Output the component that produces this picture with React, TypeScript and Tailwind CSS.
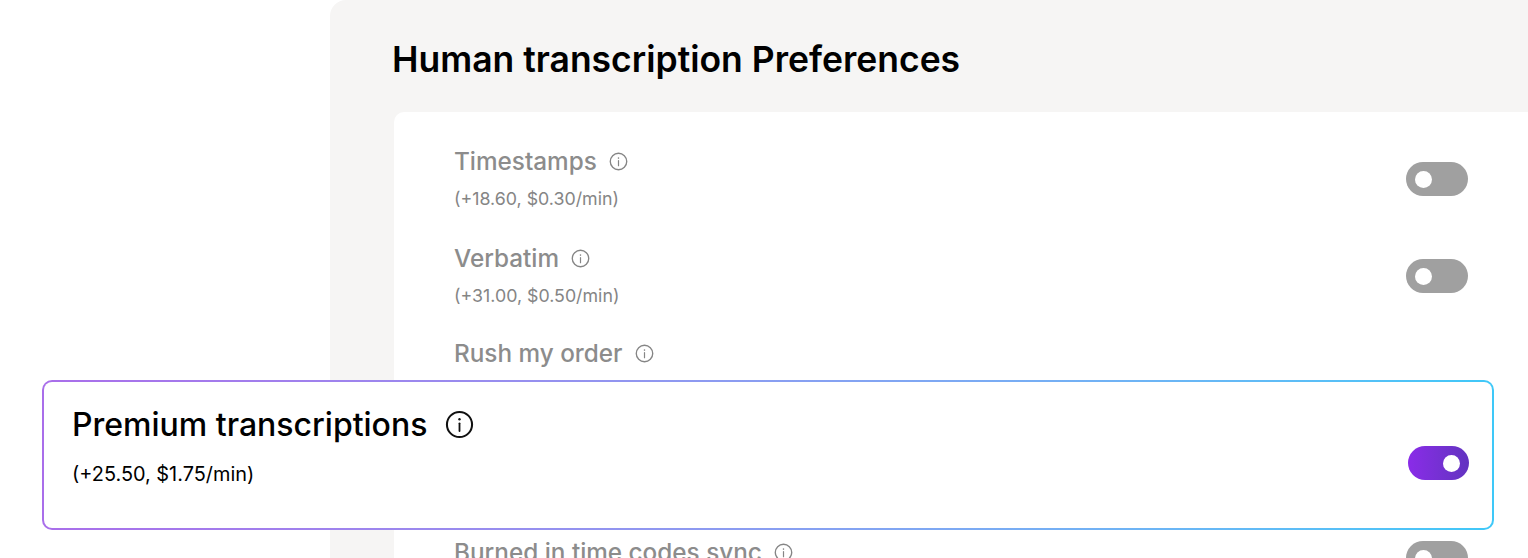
import React from 'react';

function InfoIcon({ className }: { className: string }) {
  return (
    <svg viewBox="0 0 24 24" fill="none" stroke="currentColor" className={className}>
      <circle cx="12" cy="12" r="10.4" strokeWidth="1.7" />
      <path d="M12 11v6.4" strokeWidth="1.5" strokeLinecap="round" />
      <circle cx="12" cy="7.7" r="1" fill="currentColor" stroke="none" />
    </svg>
  );
}

function Toggle() {
  return (
    <div className="flex h-[34px] w-[62px] shrink-0 items-center rounded-full bg-[#a0a0a0] pl-[9px]">
      <div className="h-[17px] w-[17px] rounded-full bg-white" />
    </div>
  );
}

function Row({ label, price, toggle = true }: { label: string; price?: string; toggle?: boolean }) {
  return (
    <div className="flex h-[97px] items-start justify-between pl-[60px] pr-[60px]">
      <div>
        <div className="flex h-[32px] items-center gap-[12px] text-[24.3px] font-medium text-[#8c8c8c]">
          {label}
          <InfoIcon className="h-[19px] w-[19px] text-[#858585]" />
        </div>
        {price && <div className="mt-[8px] text-[17.8px] leading-[28px] text-[#858585]">{price}</div>}
      </div>
      {toggle && (
        <div className="mt-[17px]">
          <Toggle />
        </div>
      )}
    </div>
  );
}

export default function App() {
  return (
    <div className="relative h-[558px] w-[1528px] overflow-hidden bg-white font-['Inter',sans-serif] text-black">
      <div className="ml-[330px] h-[700px] rounded-tl-[16px] bg-[#f6f5f4] pl-[62px]">
        <h1 className="flex h-[112px] items-center pt-[7px] text-[35.5px] font-semibold">Human transcription Preferences</h1>
        <div className="ml-[2px] h-[600px] rounded-l-[10px] bg-white pt-[33px]">
          <Row label="Timestamps" price="(+18.60, $0.30/min)" />
          <Row label="Verbatim" price="(+31.00, $0.50/min)" />
          <div className="-mt-[2px]">
            <Row label="Rush my order" toggle={false} />
          </div>
          <div className="h-[102px]" />
          <div className="flex items-start justify-between pl-[60px] pr-[60px]">
            <div className="flex h-[32px] items-center gap-[12px] text-[24.3px] font-medium text-[#8c8c8c]">
              Burned in time codes sync
              <InfoIcon className="h-[19px] w-[19px] text-[#858585]" />
            </div>
            <div className="mt-[5px]">
              <Toggle />
            </div>
          </div>
        </div>
      </div>

      <div className="absolute left-[42px] top-[380px] h-[150px] w-[1452px] rounded-[10px] bg-gradient-to-r from-[#a96eea] to-[#3ec8f8] p-[2px]">
        <div className="flex h-full items-center justify-between rounded-[8px] bg-white pl-[28px] pr-[23px]">
          <div className="-mt-[20px]">
            <div className="flex items-center gap-[18px] text-[32px] font-medium leading-[44px]">
              Premium transcriptions
              <InfoIcon className="h-[29px] w-[29px] text-[#111]" />
            </div>
            <div className="mt-[13px] text-[19.9px] leading-[28px]">(+25.50, $1.75/min)</div>
          </div>
          <div className="mt-[16px] flex h-[34px] w-[61px] items-center justify-end rounded-full bg-gradient-to-r from-[#8a2be8] to-[#6233c0] pr-[9px]">
            <div className="h-[17px] w-[17px] rounded-full bg-white" />
          </div>
        </div>
      </div>
    </div>
  );
}
